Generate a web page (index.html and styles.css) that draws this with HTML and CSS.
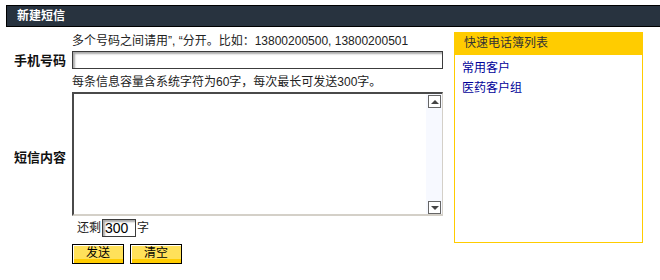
FILE: index.html
```html
<html>
<head>
    <title>新建短信</title>
    <link rel="stylesheet" href="styles.css">
</head>
<body>
    <div class="title-bar">新建短信</div>

    <div class="main">
        <form class="sms-form">
            <p class="hint">多个号码之间请用”, “分开。比如：13800200500, 13800200501</p>
            <label class="field-label" for="phone">手机号码</label>
            <input type="text" id="phone" class="text-input phone-input">

            <p class="hint hint-content">每条信息容量含系统字符为60字，每次最长可发送300字。</p>
            <label class="field-label label-content" for="content">短信内容</label>
            <div class="msg-box">
                <textarea id="content"></textarea>
                <div class="scrollbar">
                    <span class="scroll-btn up"></span>
                    <span class="scroll-btn down"></span>
                </div>
            </div>

            <div class="counter">
                还剩<input type="text" class="text-input count-input" value="300" readonly>字
            </div>

            <div class="actions">
                <button type="button" class="btn">发送</button>
                <button type="reset" class="btn">清空</button>
            </div>
        </form>

        <div class="contacts">
            <div class="contacts-head">快速电话簿列表</div>
            <ul class="contacts-list">
                <li><a href="#">常用客户</a></li>
                <li><a href="#">医药客户组</a></li>
            </ul>
        </div>
    </div>
</body>
</html>
```

FILE: styles.css
```css
body {
    margin: 0;
    font-family: 'Liberation Sans', 'Noto Sans CJK SC', sans-serif;
    font-size: 12px;
    color: #222;
    background: #fff;
    overflow: hidden;
}
.title-bar {
    margin: 5px 0 0 6px;
    height: 20px;
    line-height: 20px;
    padding-left: 10px;
    background: #28333f;
    border: 1px solid #000;
    border-right: none;
    color: #fff;
    font-weight: bold;
    font-size: 12px;
}
.main {
    display: flex;
    align-items: flex-start;
    gap: 11px;
    margin-top: 5px;
}
.sms-form {
    display: grid;
    grid-template-columns: 66px 371px;
    column-gap: 6px;
    margin: 0;
}
.hint {
    grid-column: 2;
    margin: 0;
    padding-top: 1px;
    line-height: 16px;
    white-space: nowrap;
}
.hint-content { padding-top: 5px; }
.field-label {
    grid-column: 1;
    align-self: center;
    text-align: right;
    font-weight: bold;
    font-size: 13px;
    color: #111;
}
.label-content { padding-top: 6px; }
.text-input {
    box-sizing: border-box;
    height: 18px;
    border: 1px solid #3c3c3c;
    box-shadow: inset 2px 2px 2px #aaa;
    padding: 0 2px;
    font-family: 'Liberation Sans', sans-serif;
    outline: none;
}
.phone-input {
    grid-column: 2;
    width: 371px;
    margin-top: 2px;
}
.msg-box {
    grid-column: 2;
    display: flex;
    box-sizing: border-box;
    height: 124px;
    margin-top: 2px;
    border-top: 2px solid #4a4a4a;
    border-left: 2px solid #4a4a4a;
    border-right: 1px solid #d4d0c8;
    border-bottom: 2px solid #d4d0c8;
    background: #fff;
}
.msg-box textarea {
    flex: 1;
    border: none;
    resize: none;
    outline: none;
    padding: 2px;
    font-family: inherit;
    font-size: 12px;
}
.scrollbar {
    width: 16px;
    box-sizing: border-box;
    padding: 1px 1px 0 2px;
    background: #f7f9ff;
    display: flex;
    flex-direction: column;
    justify-content: space-between;
}
.scroll-btn {
    width: 13px;
    height: 13px;
    box-sizing: border-box;
    border: 1px solid #666;
    background: #fff;
    display: flex;
    align-items: center;
    justify-content: center;
}
.scroll-btn::before {
    content: '';
    border-left: 4px solid transparent;
    border-right: 4px solid transparent;
}
.scroll-btn.up::before { border-bottom: 4px solid #444; }
.scroll-btn.down::before { border-top: 4px solid #444; }
.counter {
    grid-column: 2;
    display: flex;
    align-items: center;
    margin-top: 3px;
    padding-left: 5px;
    line-height: 18px;
}
.count-input {
    width: 34px;
    margin: 0 1px;
    font-size: 14px;
    color: #000;
}
.actions {
    grid-column: 2;
    display: flex;
    gap: 6px;
    margin-top: 7px;
}
.btn {
    box-sizing: border-box;
    width: 52px;
    height: 20px;
    padding: 0 0 3px;
    border: 1px solid #000;
    background: linear-gradient(to bottom, #ffe15a 0, #ffe15a 14px, #ffcc00 14px);
    box-shadow: inset 1px 1px 0 #fff;
    font-family: 'Liberation Sans', 'Noto Sans CJK SC', sans-serif;
    font-size: 12px;
    line-height: 14px;
    color: #000;
    cursor: pointer;
}
.contacts {
    box-sizing: border-box;
    width: 189px;
    height: 211px;
    border: 1px solid #ffcc00;
}
.contacts-head {
    height: 22px;
    line-height: 20px;
    padding-left: 9px;
    background: #ffcc00;
    color: #333;
}
.contacts-list {
    list-style: none;
    margin: 0;
    padding: 3px 0 0 7px;
}
.contacts-list li { line-height: 20px; }
.contacts-list a {
    color: #000099;
    text-decoration: none;
}
```
